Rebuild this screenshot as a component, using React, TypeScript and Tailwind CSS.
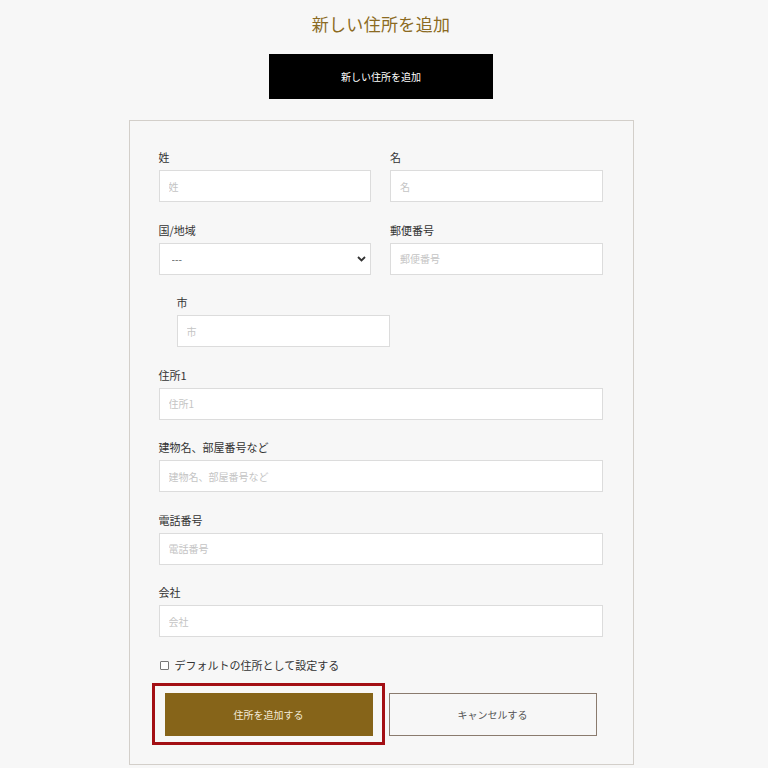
const jp = "font-['Noto_Sans_CJK_JP','Noto_Sans',sans-serif]";

function Field({ label, placeholder, className = "" }: { label: string; placeholder: string; className?: string }) {
  return (
    <div className={`flex flex-col ${className}`}>
      <label className="text-[11px] leading-[16px] text-[#333] mb-[5px]">{label}</label>
      <input
        placeholder={placeholder}
        className="h-[32px] w-full border border-[#dcdcdc] bg-white px-[9px] text-[10px] text-[#333] placeholder:text-[#c4c4c4] outline-none"
      />
    </div>
  );
}

export default function App() {
  return (
    <div className={`min-h-[768px] bg-[#f7f7f7] ${jp}`}>
      <div className="flex flex-col items-center pr-[6px]">
        <h1 className="mt-[13px] text-[17px] leading-[22px] text-[#8b6a22] tracking-[0.02em]">新しい住所を追加</h1>

        <button className="mt-[19px] h-[45px] w-[224px] bg-black text-[10px] text-white">新しい住所を追加</button>

        <div className="mt-[21px] w-[505px] border border-[#d3cfca] bg-[#f7f7f7] pl-[29px] pr-[30px] pt-[28px] pb-[19px]">
          <div className="flex flex-col gap-y-[19.5px]">
            <div className="grid grid-cols-2 gap-x-[19px]">
              <Field label="姓" placeholder="姓" />
              <Field label="名" placeholder="名" />
            </div>

            <div className="grid grid-cols-2 gap-x-[19px]">
              <div className="flex flex-col">
                <label className="text-[11px] leading-[16px] text-[#333] mb-[5px]">国/地域</label>
                <div className="relative">
                  <select className="h-[32px] w-full appearance-none border border-[#dcdcdc] bg-white px-[12px] text-[10px] text-[#555] outline-none">
                    <option>---</option>
                  </select>
                  <svg className="pointer-events-none absolute right-[5px] top-[13px]" width="9" height="6" viewBox="0 0 9 6">
                    <path d="M1 1l3.5 3.5L8 1" fill="none" stroke="#333" strokeWidth="1.8" />
                  </svg>
                </div>
              </div>
              <Field label="郵便番号" placeholder="郵便番号" />
            </div>

            <div className="grid grid-cols-2 gap-x-[19px]">
              <Field label="市" placeholder="市" className="ml-[18px] -mr-[19px]" />
            </div>

            <Field label="住所1" placeholder="住所1" />
            <Field label="建物名、部屋番号など" placeholder="建物名、部屋番号など" />
            <Field label="電話番号" placeholder="電話番号" />
            <Field label="会社" placeholder="会社" />
          </div>

          <label className="mt-[20px] flex items-center gap-[6px] text-[11px] leading-[16px] text-[#333]">
            <span className="ml-[1px] h-[9px] w-[9px] rounded-[1px] border border-[#777] bg-white" />
            デフォルトの住所として設定する
          </label>

          <div className="mt-[10px] flex items-center">
            <div className="-ml-[7px] border-[3px] border-[#a30f14] pl-[10px] pr-[9px] pt-[7px] pb-[6px]">
              <button className="h-[43px] w-[208px] bg-[#866419] text-[10px] text-[#f3ead6]">住所を追加する</button>
            </div>
            <button className="ml-[4px] h-[43px] w-[208px] border border-[#8a7b6e] bg-[#f7f7f7] text-[10px] text-[#555]">キャンセルする</button>
          </div>
        </div>
      </div>
    </div>
  );
}
